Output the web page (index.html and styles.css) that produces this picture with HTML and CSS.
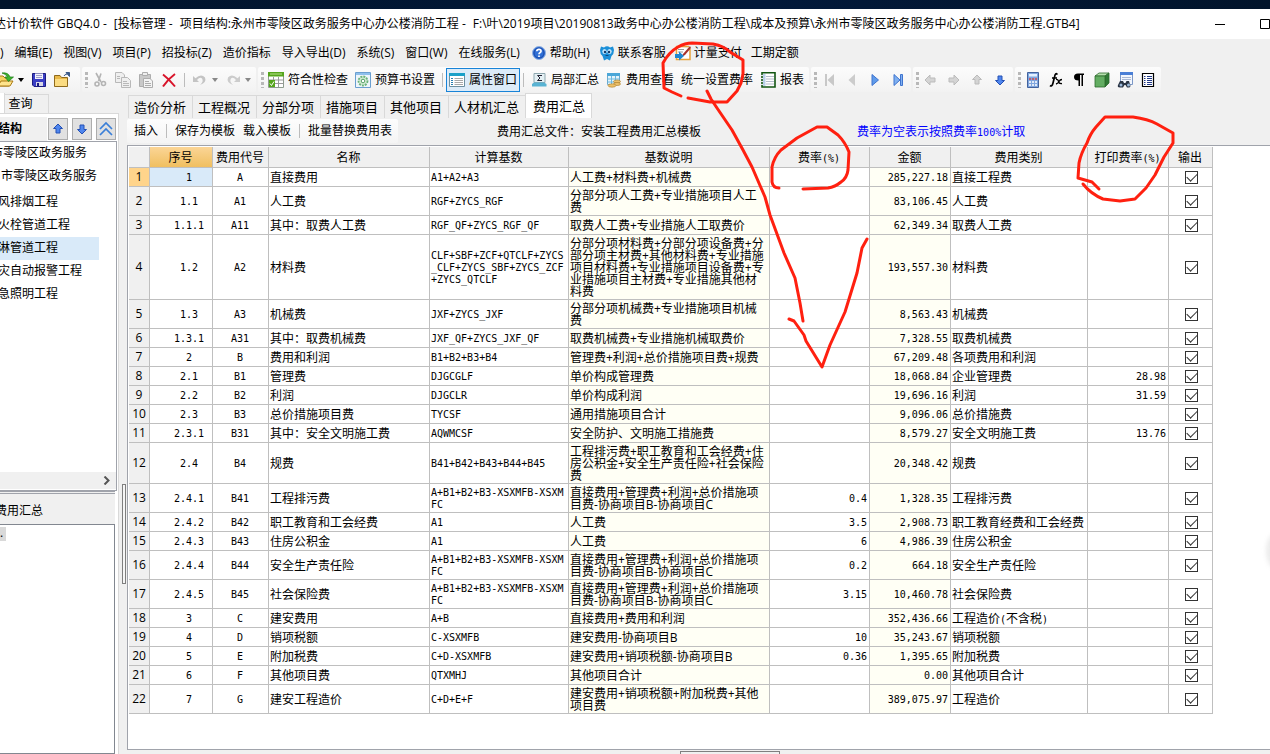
FILE: index.html
```html
<!DOCTYPE html>
<html lang="zh-CN">
<head>
<meta charset="utf-8">
<title>计价软件 GBQ4.0</title>
<link rel="stylesheet" href="styles.css">
</head>
<body>
<div class="desktop-strip"></div>
<header class="titlebar">
  <h1 class="title"><span>达计价软件 GBQ4.0 -</span><span>[投标管理 -</span><span>项目结构:永州市零陵区政务服务中心办公楼消防工程 -</span><span>F:\叶\2019项目\20190813政务中心办公楼消防工程\成本及预算\永州市零陵区政务服务中心办公楼消防工程.GTB4]</span></h1>
  <div class="window-buttons">
    <button class="win" aria-label="最小化"><svg width="10" height="10"><path d="M0 5.5H10" stroke="#000"/></svg></button>
    <button class="win" aria-label="最大化"><svg width="10" height="10"><path d="M.5.5H9.5V9.5H.5Z" stroke="#000" fill="none"/></svg></button>
  </div>
</header>
<nav class="menubar">
  <button class="menu">)</button>
  <button class="menu">编辑(E)</button>
  <button class="menu">视图(V)</button>
  <button class="menu">项目(P)</button>
  <button class="menu">招投标(Z)</button>
  <button class="menu">造价指标</button>
  <button class="menu">导入导出(D)</button>
  <button class="menu">系统(S)</button>
  <button class="menu">窗口(W)</button>
  <button class="menu">在线服务(L)</button>
  <button class="menu"><svg class="ico" viewBox="0 0 16 16"><circle cx="8" cy="8" r="6.5" fill="#2f6fd6" stroke="#8fb0e0"/><circle cx="8" cy="8" r="5" fill="none" stroke="#1b4aa8"/><path d="M5.8 6.2C6 3.6 10.4 3.8 10 6.4C9.8 7.6 8 7.8 8 9.2M8 10.6V12" fill="none" stroke="#fff" stroke-width="1.7"/></svg>帮助(H)</button>
  <button class="menu menu-near"><svg class="ico" viewBox="0 0 16 16"><path d="M2 1.5L5 2.5Q8 0 11 2.5L14 1.5L15 5Q15 9 12.5 11L11 15.5L8 14L5 15.5L3.500 11Q1 9 1 5Z" fill="#1a8fd8"/><ellipse cx="5.500" cy="6.500" rx="2.200" ry="2.600" fill="#bfe4fb"/><ellipse cx="10.500" cy="6.500" rx="2.200" ry="2.600" fill="#bfe4fb"/><circle cx="6" cy="7" r="1.200" fill="#123c6b"/><circle cx="10" cy="7" r="1.200" fill="#123c6b"/><path d="M6.500 10.500H9.500" stroke="#0d4a80"/></svg>联系客服</button>
  <button class="menu menu-near"><svg class="ico" viewBox="0 0 16 16"><path d="M1.500 1V14.500H15V4" fill="#fff" stroke="#e7a33a" stroke-width="1.500"/><path d="M1 1.500H14" stroke="#e7a33a" stroke-width="1.500"/><path d="M3 4.500H9M3 7H8" stroke="#999"/><path d="M15 1L8 9L6.500 12L10 10L16 3Z" fill="#a8322a"/><path d="M0 9H4V6.500L9 11L4 15.500V13H0Z" fill="#1f87d0"/></svg>计量支付</button>
  <button class="menu menu-near">工期定额</button>
</nav>
<div class="toolbar">
  <div class="group group-first">
    <button class="tool" aria-label="打开"><svg class="ico" viewBox="0 0 16 16"><path d="M0 4H5L7 6H11V14H0Z" fill="#f5d263" stroke="#a97a14"/><path d="M0 14L3 9H15L12 14Z" fill="#ffe48c" stroke="#a97a14"/><path d="M4 1Q10 0 12 5H15.500L10.500 9.500L7 5H9.500Q8 2 4 1Z" fill="#3db52e" stroke="#1d7a17" stroke-width=".7"/></svg><svg class="caret" viewBox="0 0 6 4"><path d="M0 0H6L3 4Z"/></svg></button>
    <button class="tool" aria-label="保存"><svg class="ico" viewBox="0 0 16 16"><path d="M1.500 1.500H14.500V14.500H3L1.500 13Z" fill="#3a3ec4" stroke="#1c1c80"/><path d="M4 1.500H12V7H4Z" fill="#f2f2fb"/><path d="M5 3.500H11M5 5.500H11" stroke="#9b9bc8"/><path d="M5 10H12V14H5Z" fill="#d8d8e6"/><path d="M6 11H8V14H6Z" fill="#1c1c80"/></svg></button>
    <button class="tool" aria-label="目录"><svg class="ico" viewBox="0 0 16 16"><path d="M.5 3.500H6L7.500 5.500H13.500V14.500H.5Z" fill="#e9b94a" stroke="#8f6a1c"/><path d="M1 7H13V14H1Z" fill="#fbdc82"/><path d="M10 4Q11 2 13 2M12 .5H15.500V4.500Z" stroke="#3a5a8a" fill="#3a5a8a"/></svg></button>
  </div>
  <div class="group">
    <span class="grip"></span>
    <button class="tool" aria-label="剪切"><svg class="ico" viewBox="0 0 16 16" fill="none" stroke="#b4b4b4" stroke-width="1.600"><path d="M4 1L9 10M9 1.500L6.500 9"/><circle cx="5" cy="12" r="2"/><circle cx="11.500" cy="11.500" r="2"/></svg></button>
    <button class="tool" aria-label="复制"><svg class="ico" viewBox="0 0 16 16" fill="#efefef" stroke="#b8b8b8"><path d="M.5.5H7L9.500 3V10.500H.5Z"/><path d="M6.500 5.500H12.500L15.500 8.500V15.500H6.500Z"/><path d="M8 9.500H12M8 11.500H14M8 13.500H14M2 4.500H5M2 6.500H5"/></svg></button>
    <button class="tool" aria-label="粘贴"><svg class="ico" viewBox="0 0 16 16" fill="#c9c9c9" stroke="#adadad"><path d="M1.500 2.500H12.500V14.500H1.500Z"/><path d="M4.500.5H9.500V3.500H4.500Z" fill="#eee"/><path d="M5.500 6.500H12L14.500 9V15.500H5.500Z" fill="#f4f4f4"/><path d="M7 9.500H11M7 11.500H13M7 13.500H13"/></svg></button>
    <button class="tool" aria-label="删除"><svg class="ico" viewBox="0 0 16 16"><path d="M2 2.500Q8 7 14 14.500M14 2Q7 7 2 14.500" fill="none" stroke="#d8142a" stroke-width="2"/></svg></button>
    <span class="sep"></span>
    <button class="tool" aria-label="撤销"><svg class="ico" viewBox="0 0 16 16"><path d="M1 4V10H7L5 8Q8 4.500 10 6.500Q12 9.500 8 13Q15 10.500 13 5.500Q9 1 3.500 6.300Z" fill="#c4c4c4"/></svg><svg class="caret caret-dim" viewBox="0 0 6 4"><path d="M0 0H6L3 4Z"/></svg></button>
    <button class="tool" aria-label="重做"><svg class="ico" viewBox="0 0 16 16"><path d="M15 4V10H9L11 8Q8 4.500 6 6.500Q4 9.500 8 13Q1 10.500 3 5.500Q7 1 12.500 6.300Z" fill="#ccc"/></svg><svg class="caret caret-dim" viewBox="0 0 6 4"><path d="M0 0H6L3 4Z"/></svg></button>
  </div>
  <div class="group">
    <span class="grip"></span>
    <button class="tool"><svg class="ico" viewBox="0 0 16 16"><path d="M.5.5H15.500V15.500H.5Z" fill="#fff" stroke="#8e9c8e"/><path d="M0 0H16V4.500H0Z" fill="#55a51c"/><path d="M2 2H14" stroke="#b9e08d"/><path d="M.5 8H15.500M.5 11.500H15.500M5.500 5V15M10.500 5V15" stroke="#999"/><path d="M1 8H7V15H1Z" fill="#55a51c"/><path d="M2 11.500L3.500 13.500L6 9.500" fill="none" stroke="#fff"/></svg>符合性检查</button>
    <button class="tool"><svg class="ico" viewBox="0 0 16 16"><path d="M.5.5H15.500V15.500H.5Z" fill="#eef6fb" stroke="#6b9fd0"/><path d="M1 1H15V3H1Z" fill="#8fc0ec"/><circle cx="8" cy="9" r="4.500" fill="#d5ecd5" stroke="#6bb37a" stroke-width="1.800" stroke-dasharray="2 1"/><circle cx="8" cy="9" r="1.800" fill="#fff" stroke="#55a068"/></svg>预算书设置</button>
    <span class="sep"></span>
    <button class="tool tool-on" aria-pressed="true"><svg class="ico" viewBox="0 0 16 16"><path d="M.5 1.500H15.500V14.500H.5Z" fill="#fff" stroke="#6d8fa0"/><path d="M0 1H16V4H0Z" fill="#1aa0c8"/><path d="M2 6.500H4M2 8.500H4M2 10.500H4M2 12.500H4" stroke="#2a7fb0"/><path d="M5.500 6.500H14M5.500 8.500H14M5.500 10.500H14M5.500 12.500H14" stroke="#a8a8a8"/></svg>属性窗口</button>
    <span class="sep"></span>
    <button class="tool"><svg class="ico" viewBox="0 0 16 16"><path d="M3 1.500H14V10.500H3Z" fill="#e4f0f4" stroke="#8fa8b0"/><path d="M11 3.500H6.500L9 6L6.500 8.500H11" fill="none" stroke="#223"/><path d="M1 12L3 10.500H13L15.500 12V14.500H1Z" fill="#59b3d3"/></svg>局部汇总</button>
    <button class="tool"><svg class="ico" viewBox="0 0 16 16"><path d="M1.500 1.500H13.500V12.500H1.500Z" fill="#e5f4fb" stroke="#6aa9cc"/><path d="M1 1H14V4H1Z" fill="#4ba7d8"/><path d="M1.500 7H13.500M1.500 10H13.500M5.500 4V12M9.500 4V12" stroke="#6ab8e0"/><ellipse cx="11" cy="9.500" rx="3.500" ry="1.500" fill="#edc16a" stroke="#a77c2c" stroke-width=".6"/><ellipse cx="11" cy="12" rx="3.500" ry="1.500" fill="#edc16a" stroke="#a77c2c" stroke-width=".6"/><ellipse cx="6" cy="13.500" rx="4" ry="1.700" fill="#edc16a" stroke="#a77c2c" stroke-width=".6"/></svg>费用查看</button>
    <button class="tool">统一设置费率</button>
    <button class="tool"><svg class="ico" viewBox="0 0 16 16"><path d="M2 .8H15V15H2Z" fill="#fff" stroke="#125512" stroke-width="1.600"/><path d="M3 2H5.500V14H3Z" fill="#b9d0e8"/><path d="M6 4.500H14M6 7H14M6 9.500H14M6 12H14" stroke="#b4bccb"/><path d="M1 3.500H3M1 6.500H3M1 9.500H3M1 12.500H3" stroke="#e8e8e8"/></svg>报表</button>
  </div>
  <div class="group">
    <span class="grip"></span>
    <button class="tool" aria-label="第一条"><svg class="ico" viewBox="0 0 16 16"><path d="M4 2H6V14H4ZM13 2V14L6.500 8Z" fill="#c8c8c8"/></svg></button>
    <button class="tool" aria-label="上一条"><svg class="ico" viewBox="0 0 16 16"><path d="M11 2V14L4.500 8Z" fill="#ccc"/></svg></button>
    <button class="tool" aria-label="下一条"><svg class="ico" viewBox="0 0 16 16"><path d="M5 2.500V13.500L11.500 8Z" fill="#5f9bea" stroke="#3f74cf"/></svg></button>
    <button class="tool" aria-label="最后一条"><svg class="ico" viewBox="0 0 16 16"><path d="M4 2.500V13.500L10 8ZM10.500 2.500H12.500V13.500H10.500Z" fill="#7fb0f0" stroke="#3f74cf"/></svg></button>
  </div>
  <div class="group">
    <span class="grip"></span>
    <button class="tool" aria-label="左移"><svg class="ico" viewBox="0 0 16 16"><path d="M2 8L7 3V6H12V10H7V13Z" fill="#d4d4d4" stroke="#bbb"/></svg></button>
    <button class="tool" aria-label="右移"><svg class="ico" viewBox="0 0 16 16"><path d="M13 8L8 3V6H3V10H8V13Z" fill="#d4d4d4" stroke="#bbb"/></svg></button>
    <button class="tool" aria-label="上移"><svg class="ico" viewBox="0 0 16 16"><path d="M8 3L12.500 7.500H10V12H6V7.500H3.500Z" fill="#d4d4d4" stroke="#bbb"/></svg></button>
    <button class="tool" aria-label="下移"><svg class="ico" viewBox="0 0 16 16"><path d="M8 13L12.500 8.500H10V4H6V8.500H3.500Z" fill="#4f86ee" stroke="#2450b4"/></svg></button>
  </div>
  <div class="group">
    <span class="grip"></span>
    <button class="tool" aria-label="计算器"><svg class="ico" viewBox="0 0 16 16"><path d="M2.500.5H13.500V15.500H2.500Z" fill="#7fa5de" stroke="#42629c"/><path d="M4 2H12V4.500H4Z" fill="#e3f0ff"/><path d="M4 10H12M4 13H12" stroke="#fff" stroke-width="1.700" stroke-dasharray="2 1"/><path d="M4 7H12" stroke="#d04a4a" stroke-width="1.700" stroke-dasharray="2 1"/></svg></button>
    <button class="tool" aria-label="函数"><svg class="ico" viewBox="0 0 16 16" fill="none" stroke="#000"><path d="M9.500 2.500Q7.500 0 6.500 5L5 11Q4 15 2 13.500M4 6H9" stroke-width="1.700"/><path d="M8 7.500Q10 7 10.500 9.500T14 11.500M14 7.500Q12 7.500 11 9.500T8 12" stroke-width="1.300"/></svg></button>
    <button class="tool" aria-label="段落"><svg class="ico" viewBox="0 0 16 16"><path d="M13 1.500V3H12V14H10.500V3H9V14H7.500V8.500Q3 8.500 3 5Q3 1.500 7 1.500Z"/></svg></button>
    <button class="tool" aria-label="图块"><svg class="ico" viewBox="0 0 16 16" stroke="#2c6a2c" stroke-width=".8"><path d="M1 4L5 1H15L11 4Z" fill="#b6e0ae"/><path d="M11 4L15 1V11L11 15Z" fill="#2f7a35"/><path d="M1 4H11V15H1Z" fill="#63ad62"/></svg></button>
    <button class="tool" aria-label="查找"><svg class="ico" viewBox="0 0 16 16"><path d="M3.500.5H15.500V12.500H3.500Z" fill="#f2f6fd" stroke="#7b97c6"/><path d="M3 0H16V3H3Z" fill="#4a7fd6"/><path d="M5 5.500H14M5 7.500H14" stroke="#a9b8d4"/><path d="M3 9H6L7 11H8.500L9.500 9H12L13.500 14Q13 15.500 12 15.500H10L8.500 13H7.500L6 15.500H3Q0 15.500 1 13Z" fill="#2a3444"/><circle cx="4" cy="13" r="1.500" fill="#9bb8d8"/><circle cx="11.500" cy="13" r="1.500" fill="#9bb8d8"/></svg></button>
    <button class="tool" aria-label="列表"><svg class="ico" viewBox="0 0 16 16"><path d="M2.500 1.500H13.500V14.500H2.500Z" fill="#fff" stroke="#000" stroke-width="1.200"/><path d="M4 4.500H5.500M4 6.500H5.500M4 8.500H5.500M4 10.500H5.500M4 12.500H5.500M7 4.500H12M7 6.500H12M7 8.500H12M7 10.500H12M7 12.500H12" stroke="#223a88"/></svg></button>
  </div>
</div>
<div class="workspace">
  <aside class="side">
    <div class="side-tabs"><span class="side-tab-open"></span><button class="side-tab">查询</button></div>
    <div class="side-body">
      <div class="side-head">
        <h2 class="side-title">结构</h2>
        <button class="sq" aria-label="上移"><svg class="ico" viewBox="0 0 16 16"><path d="M8 3L12.500 7.500H10V12H6V7.500H3.500Z" fill="#4f86ee" stroke="#2450b4"/></svg></button>
        <button class="sq" aria-label="下移"><svg class="ico" viewBox="0 0 16 16"><path d="M8 13L12.500 8.500H10V4H6V8.500H3.500Z" fill="#4f86ee" stroke="#2450b4"/></svg></button>
        <button class="sq" aria-label="收起"><svg class="ico" viewBox="0 0 16 16"><path d="M2 8L8 2L14 8M2 14L8 8L14 14" fill="none" stroke="#3a7fd8" stroke-width="1.700"/></svg></button>
      </div>
      <div class="tree">
        <ul class="tree-list">
          <li class="node node-root">市零陵区政务服务</li>
          <li class="node node-unit">市零陵区政务服务</li>
          <li class="node">风排烟工程</li>
          <li class="node">火栓管道工程</li>
          <li class="node node-on">淋管道工程</li>
          <li class="node">灾自动报警工程</li>
          <li class="node">急照明工程</li>
        </ul>
        <div class="hscroll"><svg width="8" height="9"><path d="M1.500.5L5.500 4.500L1.500 8.500" fill="none" stroke="#555" stroke-width="2"/></svg></div>
      </div>
      <h2 class="panel-title">费用汇总</h2>
      <div class="panel-box"><span class="chip">.</span></div>
    </div>
  </aside>
  <div class="gutter"><span class="splitter"></span></div>
  <main class="main">
    <div class="tabs" role="tablist">
      <button class="tab" role="tab">造价分析</button>
      <button class="tab" role="tab">工程概况</button>
      <button class="tab" role="tab">分部分项</button>
      <button class="tab" role="tab">措施项目</button>
      <button class="tab" role="tab">其他项目</button>
      <button class="tab" role="tab">人材机汇总</button>
      <button class="tab tab-on" role="tab" aria-selected="true">费用汇总</button>
    </div>
    <div class="subbar">
      <div class="subtools">
        <button class="tool">插入</button><span class="sep"></span>
        <button class="tool">保存为模板</button>
        <button class="tool">载入模板</button><span class="sep"></span>
        <button class="tool">批量替换费用表</button>
      </div>
      <p class="template">费用汇总文件：安装工程费用汇总模板</p>
      <p class="hint">费率为空表示按照费率<span class="m">100%</span>计取</p>
    </div>
    <div class="grid">
      <table class="sheet">
        <colgroup><col class="w-no"><col class="w-seq"><col class="w-code"><col class="w-name"><col class="w-base"><col class="w-desc"><col class="w-rate"><col class="w-sum"><col class="w-kind"><col class="w-print"><col class="w-out"></colgroup>
        <thead><tr><th></th><th class="picked">序号</th><th>费用代号</th><th>名称</th><th>计算基数</th><th>基数说明</th><th>费率<span class="m">(%)</span></th><th>金额</th><th>费用类别</th><th>打印费率<span class="m">(%)</span></th><th>输出</th></tr></thead>
        <tbody>
          <tr class="current"><th>1</th><td>1</td><td>A</td><td>直接费用</td><td>A1+A2+A3</td><td>人工费+材料费+机械费</td><td></td><td>285,227.18</td><td>直接工程费</td><td></td><td><input type="checkbox" aria-label="输出 1" checked></td></tr>
          <tr><th>2</th><td>1.1</td><td>A1</td><td>人工费</td><td>RGF+ZYCS_RGF</td><td>分部分项人工费+专业措施项目人工<br>费</td><td></td><td>83,106.45</td><td>人工费</td><td></td><td><input type="checkbox" aria-label="输出 2" checked></td></tr>
          <tr><th>3</th><td>1.1.1</td><td>A11</td><td>其中：取费人工费</td><td>RGF_QF+ZYCS_RGF_QF</td><td>取费人工费+专业措施人工取费价</td><td></td><td>62,349.34</td><td>取费人工费</td><td></td><td><input type="checkbox" aria-label="输出 3" checked></td></tr>
          <tr><th>4</th><td>1.2</td><td>A2</td><td>材料费</td><td>CLF+SBF+ZCF+QTCLF+ZYCS<br>_CLF+ZYCS_SBF+ZYCS_ZCF<br>+ZYCS_QTCLF</td><td>分部分项材料费+分部分项设备费+分<br>部分项主材费+其他材料费+专业措施<br>项目材料费+专业措施项目设备费+专<br>业措施项目主材费+专业措施其他材<br>料费</td><td></td><td>193,557.30</td><td>材料费</td><td></td><td><input type="checkbox" aria-label="输出 4" checked></td></tr>
          <tr><th>5</th><td>1.3</td><td>A3</td><td>机械费</td><td>JXF+ZYCS_JXF</td><td>分部分项机械费+专业措施项目机械<br>费</td><td></td><td>8,563.43</td><td>机械费</td><td></td><td><input type="checkbox" aria-label="输出 5" checked></td></tr>
          <tr><th>6</th><td>1.3.1</td><td>A31</td><td>其中：取费机械费</td><td>JXF_QF+ZYCS_JXF_QF</td><td>取费机械费+专业措施机械取费价</td><td></td><td>7,328.55</td><td>取费机械费</td><td></td><td><input type="checkbox" aria-label="输出 6" checked></td></tr>
          <tr><th>7</th><td>2</td><td>B</td><td>费用和利润</td><td>B1+B2+B3+B4</td><td>管理费+利润+总价措施项目费+规费</td><td></td><td>67,209.48</td><td>各项费用和利润</td><td></td><td><input type="checkbox" aria-label="输出 7" checked></td></tr>
          <tr><th>8</th><td>2.1</td><td>B1</td><td>管理费</td><td>DJGCGLF</td><td>单价构成管理费</td><td></td><td>18,068.84</td><td>企业管理费</td><td>28.98</td><td><input type="checkbox" aria-label="输出 8" checked></td></tr>
          <tr><th>9</th><td>2.2</td><td>B2</td><td>利润</td><td>DJGCLR</td><td>单价构成利润</td><td></td><td>19,696.16</td><td>利润</td><td>31.59</td><td><input type="checkbox" aria-label="输出 9" checked></td></tr>
          <tr><th>10</th><td>2.3</td><td>B3</td><td>总价措施项目费</td><td>TYCSF</td><td>通用措施项目合计</td><td></td><td>9,096.06</td><td>总价措施费</td><td></td><td><input type="checkbox" aria-label="输出 10" checked></td></tr>
          <tr><th>11</th><td>2.3.1</td><td>B31</td><td>其中：安全文明施工费</td><td>AQWMCSF</td><td>安全防护、文明施工措施费</td><td></td><td>8,579.27</td><td>安全文明施工费</td><td>13.76</td><td><input type="checkbox" aria-label="输出 11" checked></td></tr>
          <tr><th>12</th><td>2.4</td><td>B4</td><td>规费</td><td>B41+B42+B43+B44+B45</td><td>工程排污费+职工教育和工会经费+住<br>房公积金+安全生产责任险+社会保险<br>费</td><td></td><td>20,348.42</td><td>规费</td><td></td><td><input type="checkbox" aria-label="输出 12" checked></td></tr>
          <tr><th>13</th><td>2.4.1</td><td>B41</td><td>工程排污费</td><td>A+B1+B2+B3-XSXMFB-XSXM<br>FC</td><td>直接费用+管理费+利润+总价措施项<br>目费-协商项目B-协商项目C</td><td>0.4</td><td>1,328.35</td><td>工程排污费</td><td></td><td><input type="checkbox" aria-label="输出 13" checked></td></tr>
          <tr><th>14</th><td>2.4.2</td><td>B42</td><td>职工教育和工会经费</td><td>A1</td><td>人工费</td><td>3.5</td><td>2,908.73</td><td>职工教育经费和工会经费</td><td></td><td><input type="checkbox" aria-label="输出 14" checked></td></tr>
          <tr><th>15</th><td>2.4.3</td><td>B43</td><td>住房公积金</td><td>A1</td><td>人工费</td><td>6</td><td>4,986.39</td><td>住房公积金</td><td></td><td><input type="checkbox" aria-label="输出 15" checked></td></tr>
          <tr><th>16</th><td>2.4.4</td><td>B44</td><td>安全生产责任险</td><td>A+B1+B2+B3-XSXMFB-XSXM<br>FC</td><td>直接费用+管理费+利润+总价措施项<br>目费-协商项目B-协商项目C</td><td>0.2</td><td>664.18</td><td>安全生产责任险</td><td></td><td><input type="checkbox" aria-label="输出 16" checked></td></tr>
          <tr><th>17</th><td>2.4.5</td><td>B45</td><td>社会保险费</td><td>A+B1+B2+B3-XSXMFB-XSXM<br>FC</td><td>直接费用+管理费+利润+总价措施项<br>目费-协商项目B-协商项目C</td><td>3.15</td><td>10,460.78</td><td>社会保险费</td><td></td><td><input type="checkbox" aria-label="输出 17" checked></td></tr>
          <tr><th>18</th><td>3</td><td>C</td><td>建安费用</td><td>A+B</td><td>直接费用+费用和利润</td><td></td><td>352,436.66</td><td>工程造价<span class="m">(</span>不含税<span class="m">)</span></td><td></td><td><input type="checkbox" aria-label="输出 18" checked></td></tr>
          <tr><th>19</th><td>4</td><td>D</td><td>销项税额</td><td>C-XSXMFB</td><td>建安费用-协商项目B</td><td>10</td><td>35,243.67</td><td>销项税额</td><td></td><td><input type="checkbox" aria-label="输出 19" checked></td></tr>
          <tr><th>20</th><td>5</td><td>E</td><td>附加税费</td><td>C+D-XSXMFB</td><td>建安费用+销项税额-协商项目B</td><td>0.36</td><td>1,395.65</td><td>附加税费</td><td></td><td><input type="checkbox" aria-label="输出 20" checked></td></tr>
          <tr><th>21</th><td>6</td><td>F</td><td>其他项目费</td><td>QTXMHJ</td><td>其他项目合计</td><td></td><td>0.00</td><td>其他项目合计</td><td></td><td><input type="checkbox" aria-label="输出 21" checked></td></tr>
          <tr><th>22</th><td>7</td><td>G</td><td>建安工程造价</td><td>C+D+E+F</td><td>建安费用+销项税额+附加税费+其他<br>项目费</td><td></td><td>389,075.97</td><td>工程造价</td><td></td><td><input type="checkbox" aria-label="输出 22" checked></td></tr>
        </tbody>
      </table>
    </div>
    <div class="dock"><span class="dock-handle"></span></div>
  </main>
</div>
<span class="bubble"></span>
<svg class="ink" width="1270" height="754" viewBox="0 0 1270 754" aria-hidden="true">
  <path d="M681 96L672 92L664 88L663 63Q669 52 678 47Q685 43 692 43L713 44Q724 46 730 52L743 60L743 74L741 83L737 91L727 102H710L688 98"/>
  <path d="M707 91L711 99L717 108L732 130L743 150L752 167L765 197L770 215L784 253L795 278L800 303L803 321"/>
  <path d="M789 319L794 321L804 335L806 341L822 367L830 345L845 312L857 273L862 248L867 239"/>
  <path d="M779 188Q773 188 772 182L772 167Q774 157 781 150L797 138L817 127H827L838 135Q845 142 849 152L848 170Q847 178 841 182Q835 187 828 188L803 189"/>
  <path d="M1099 189L1092 182L1078 178L1079 163Q1081 153 1087 143Q1090 134 1096 127L1105 117H1133Q1148 119 1157 124L1173 133V143L1164 157L1155 175L1146 188L1135 199L1120 201L1103 199Q1091 194 1083 184"/>
</svg>
</body>
</html>
```
FILE: styles.css
```css
* { box-sizing: border-box; }

body {
  margin: 0;
  height: 100vh;
  display: flex;
  flex-direction: column;
  overflow: hidden;
  position: relative;
  background: #f0f0f0;
  color: #000;
  font: 12px/16px "Open Sans", "Noto Sans CJK SC", sans-serif;
}

button {
  font: inherit;
  color: inherit;
  background: none;
  border: 0;
  padding: 0;
  white-space: nowrap;
}

h1, h2, p, ul { margin: 0; padding: 0; font-size: 12px; font-weight: 400; }

.ico { width: 16px; height: 16px; flex: none; }

.desktop-strip { flex: none; height: 9px; background: linear-gradient(90deg, #01142b, #02193a 60%, #01142b); }

.titlebar {
  flex: none;
  height: 30px;
  display: flex;
  align-items: center;
  justify-content: space-between;
  background: #fff;
  overflow: hidden;
}
.title { display: flex; gap: 7px; margin-left: -6px; white-space: nowrap; }
.window-buttons { display: flex; gap: 35px; margin-right: 0; }
.win { display: flex; }

.menubar { flex: none; height: 28px; display: flex; align-items: center; gap: 11px; overflow: hidden; }
.menu { display: flex; align-items: center; gap: 3px; }
.menu-near { margin-left: -2px; }

.toolbar { flex: none; height: 25px; display: flex; gap: 2px; overflow: hidden; }
.group {
  display: flex;
  align-items: center;
  gap: 7px;
  padding: 0 5px 0 3px;
  background: linear-gradient(#fcfcfc, #f2f2f2);
  border-radius: 2px;
}
.group-first { padding-left: 0; margin-left: -2px; padding-right: 10px; }
.grip {
  width: 3px;
  height: 16px;
  margin-right: -3px;
  background: repeating-linear-gradient(#b8b8b8 0 3px, transparent 3px 5px);
}
.tool { display: flex; align-items: center; gap: 4px; }
.tool-on {
  height: 24px;
  margin: 0 -4px;
  padding: 0 2px;
  border: 1px solid #1883d7;
  background: #dcebf8;
}
.caret { width: 6px; height: 4px; fill: #000; }
.caret-dim { fill: #888; }
.sep { width: 1px; height: 14px; background: #bcbcbc; }

.workspace { flex: 1; min-height: 0; display: flex; }

.side { flex: none; width: 119px; display: flex; flex-direction: column; overflow: hidden; }
.side-tabs { height: 21px; display: flex; align-items: flex-end; }
.side-tab-open { width: 5px; height: 20px; background: #fff; border-right: 1px solid #d9d9d9; }
.side-tab { width: 44px; height: 19px; padding-right: 12px; border: 1px solid #d9d9d9; border-width: 1px 1px 0 0; }
.side-body {
  flex: 1;
  display: flex;
  flex-direction: column;
  background: #fff;
  border: 1px solid #d9d9d9;
  border-width: 1px 1px 0 0;
  padding-top: 3px;
}
.side-head { display: flex; align-items: center; gap: 4px; height: 24px; }
.side-title {
  flex: 1;
  height: 24px;
  background: #f0f0f0;
  text-indent: -2px;
  line-height: 24px;
  font-weight: 700;
}
.side-head .sq:first-of-type { margin-left: -3px; }
.sq {
  width: 20px;
  height: 22px;
  display: flex;
  align-items: center;
  justify-content: center;
  background: #e1e1e1;
  border: 1px solid #adadad;
}
.side-head .sq:last-child { margin-right: 2px; }
.tree {
  height: 350px;
  margin-right: 1px;
  display: flex;
  flex-direction: column;
  border: 1px solid #a0a3ab;
  border-left: 0;
}
.tree-list { flex: 1; list-style: none; }
.node { width: 99px; height: 23px; line-height: 21px; text-indent: -2px; white-space: nowrap; overflow: hidden; }
.node-root { text-indent: -9px; }
.node-unit { margin-bottom: 3px; text-indent: 1px; }
.node-on { background: #d9eaf9; }
.hscroll {
  height: 17px;
  margin-bottom: 1px;
  padding-right: 5px;
  display: flex;
  align-items: center;
  justify-content: flex-end;
  background: #f0f0f0;
}
.panel-title {
  height: 33px;
  margin: 0 3px 0 0;
  padding-top: 7px;
  border-top: 3px double #a0a3ab;
  background: #f0f0f0;
  text-indent: -5px;
  line-height: 20px;
}
.panel-box { flex: 1; margin-right: 3px; border: 1px solid #828790; border-left: 0; padding-top: 2px; }
.chip { display: block; width: 6px; height: 14px; background: #d9d9d9; line-height: 12px; }

.gutter { flex: none; width: 8px; padding: 392px 1px 0 3px; }
.splitter { display: block; height: 100px; border: 1px solid #7f7f7f; background: #f6f6f6; }

.main { flex: 1; min-width: 0; display: flex; flex-direction: column; }

.tabs { height: 26px; display: flex; align-items: flex-end; padding-left: 1px; }
.tab {
  height: 23px;
  padding: 0 6px 0 5px;
  border: 1px solid #d9d9d9;
  border-width: 1px 0 0 1px;
  font-size: 13px;
}
.tab-on { height: 25px; padding: 0 6px 0 7px; border-right-width: 1px; background: #fff; }

.subbar { height: 27px; display: flex; align-items: flex-start; }
.subtools {
  height: 24px;
  margin-top: 1px;
  padding: 0 6px 0 7px;
  display: flex;
  align-items: center;
  gap: 8px;
  border-radius: 2px;
  background: linear-gradient(#fdfdfd, #f4f4f4);
}
.template { margin: 6px 0 0 99px; white-space: nowrap; }
.hint { margin: 6px 0 0 156px; color: #00f; white-space: nowrap; }

.grid {
  flex: 1;
  min-height: 0;
  overflow: hidden;
  padding: 1px 0 0 1px;
  background: #fff;
  border: 1px solid #a0a3ab;
  border-right: 0;
}
.sheet { table-layout: fixed; width: 1084px; border-collapse: separate; border-spacing: 0; }
.w-no { width: 21px; }
.w-seq { width: 63px; }
.w-code { width: 56px; }
.w-name { width: 161px; }
.w-base { width: 139px; }
.w-desc { width: 201px; }
.w-rate { width: 100px; }
.w-sum { width: 81px; }
.w-kind { width: 137px; }
.w-print { width: 81px; }
.w-out { width: 44px; }

.sheet th, .sheet td {
  height: 19px;
  padding: 3px 2px 1px 1px;
  border: 1px solid #bfbfbf;
  border-width: 0 1px 1px 0;
  line-height: 12px;
  font-weight: 400;
  white-space: nowrap;
  vertical-align: middle;
}
.sheet thead th { height: 21px; background: #f0f0f0; }
.sheet thead .picked { background: linear-gradient(#fbd596, #f0bf60); }
.sheet tbody th { background: #f0f0f0; }
.sheet .current th { background: #ffd48b; }
.sheet .current td:nth-child(2) { background: #d9eaf9; }
.m,
.sheet td:nth-child(2), .sheet td:nth-child(3), .sheet td:nth-child(5),
.sheet td:nth-child(7), .sheet td:nth-child(8), .sheet td:nth-child(10) {
  font-family: "DejaVu Sans Mono", monospace;
  font-size: 10px;
}
.sheet td:nth-child(2) { padding-left: 18px; text-align: center; }
.sheet td:nth-child(3), .sheet td:nth-child(11) { text-align: center; }
.sheet tbody th { padding: 2px 0; text-align: center; }
.sheet td:nth-child(6), .sheet td:nth-child(8) { background: #fffff5; }
.sheet td:nth-child(7), .sheet td:nth-child(8), .sheet td:nth-child(10) { text-align: right; }
.sheet td:nth-child(11) { padding: 2px 0 2px 1px; }

.sheet input {
  appearance: none;
  display: block;
  width: 13px;
  height: 13px;
  margin: 0 auto;
  border: 1px solid #333;
  background: #fff;
}
.sheet input:checked::after {
  content: "";
  display: block;
  width: 9px;
  height: 5px;
  margin: 1px;
  border: solid #333;
  border-width: 0 0 1px 1px;
  transform: rotate(-45deg);
}

.dock { height: 4px; padding-top: 1px; }
.dock-handle { display: block; width: 100px; height: 3px; margin: 0 auto; border: 1px solid #7f7f7f; border-bottom: 0; transform: translateX(31px); }

.bubble {
  position: absolute;
  right: -20px;
  top: 532px;
  width: 24px;
  height: 38px;
  border-radius: 50%;
  background: #ececec;
  filter: blur(2px);
}
.ink {
  position: absolute;
  top: 0;
  left: 0;
  pointer-events: none;
  fill: none;
  stroke: #ff2010;
  stroke-width: 3;
  stroke-linecap: round;
  stroke-linejoin: round;
}
```
